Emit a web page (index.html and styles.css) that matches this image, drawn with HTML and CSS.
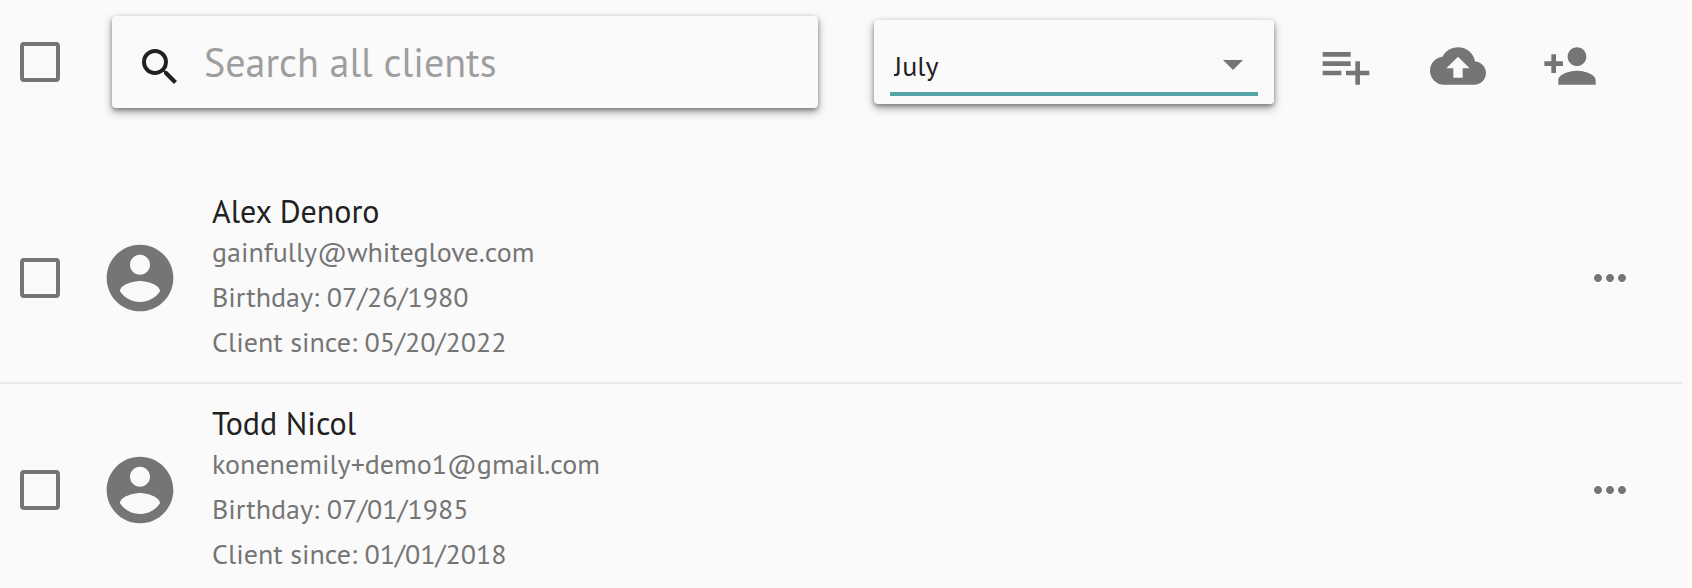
FILE: index.html
```html
<!doctype html>
<html lang="en">
  <head>
    <meta charset="UTF-8" />
    <meta name="viewport" content="width=device-width, initial-scale=1.0" />
    <title>Clients</title>
    <link rel="stylesheet" href="styles.css" />
  </head>
  <body>
    <header class="toolbar">
      <input class="checkbox" type="checkbox" aria-label="Select all clients" />

      <label class="search card">
        <svg class="search-icon" viewBox="0 0 24 24" aria-hidden="true">
          <path
            d="M15.5 14h-.79l-.28-.27A6.471 6.471 0 0 0 16 9.5 6.5 6.5 0 1 0 9.5 16c1.61 0 3.09-.59 4.23-1.57l.27.28v.79l5 4.99L20.49 19l-4.99-5zm-6 0C7.01 14 5 11.99 5 9.5S7.01 5 9.5 5 14 7.01 14 9.5 11.99 14 9.5 14z"
          />
        </svg>
        <input
          class="search-input"
          type="text"
          placeholder="Search all clients"
          aria-label="Search all clients"
        />
      </label>

      <div class="month card">
        <select class="month-select" aria-label="Birthday month">
          <option>January</option>
          <option>February</option>
          <option>March</option>
          <option>April</option>
          <option>May</option>
          <option>June</option>
          <option selected>July</option>
          <option>August</option>
          <option>September</option>
          <option>October</option>
          <option>November</option>
          <option>December</option>
        </select>
        <svg class="month-arrow" viewBox="0 0 24 24" aria-hidden="true">
          <path d="M7 10l5 5 5-5z" />
        </svg>
      </div>

      <div class="actions">
        <button class="icon-button" type="button" aria-label="Add to list">
          <svg viewBox="0 0 24 24">
            <path
              d="M14 10H2v2h12v-2zm0-4H2v2h12V6zm4 8v-4h-2v4h-4v2h4v4h2v-4h4v-2h-4zM2 16h8v-2H2v2z"
            />
          </svg>
        </button>
        <button class="icon-button" type="button" aria-label="Upload clients">
          <svg viewBox="0 0 24 24">
            <path
              d="M19.35 10.04C18.67 6.59 15.64 4 12 4 9.11 4 6.6 5.64 5.35 8.04 2.34 8.36 0 10.91 0 14c0 3.31 2.69 6 6 6h13c2.76 0 5-2.24 5-5 0-2.64-2.05-4.78-4.65-4.96zM14 13v4h-4v-4H7l5-5 5 5h-3z"
            />
          </svg>
        </button>
        <button class="icon-button" type="button" aria-label="Add client">
          <svg viewBox="0 0 24 24">
            <path
              d="M15 12c2.21 0 4-1.79 4-4s-1.79-4-4-4-4 1.79-4 4 1.79 4 4 4zm-9-2V7H4v3H1v2h3v3h2v-3h3v-2H6zm9 4c-2.67 0-8 1.34-8 4v2h16v-2c0-2.66-5.33-4-8-4z"
            />
          </svg>
        </button>
      </div>
    </header>

    <ul class="client-list">
      <li class="client">
        <input class="checkbox" type="checkbox" aria-label="Select Alex Denoro" />
        <svg class="avatar" viewBox="0 0 24 24" aria-hidden="true">
          <path
            d="M12 2C6.48 2 2 6.48 2 12s4.48 10 10 10 10-4.48 10-10S17.52 2 12 2zm0 3c1.66 0 3 1.34 3 3s-1.34 3-3 3-3-1.34-3-3 1.34-3 3-3zm0 14.2c-2.5 0-4.71-1.28-6-3.22.03-1.99 4-3.08 6-3.08 1.99 0 5.97 1.09 6 3.08-1.29 1.94-3.5 3.22-6 3.22z"
          />
        </svg>
        <div class="client-text">
          <h3>Alex Denoro</h3>
          <p>gainfully@whiteglove.com</p>
          <p>Birthday: 07/26/1980</p>
          <p>Client since: 05/20/2022</p>
        </div>
        <button class="more-button" type="button" aria-label="More options">
          <svg viewBox="0 0 24 24">
            <path
              d="M6 10c-1.1 0-2 .9-2 2s.9 2 2 2 2-.9 2-2-.9-2-2-2zm12 0c-1.1 0-2 .9-2 2s.9 2 2 2 2-.9 2-2-.9-2-2-2zm-6 0c-1.1 0-2 .9-2 2s.9 2 2 2 2-.9 2-2-.9-2-2-2z"
            />
          </svg>
        </button>
      </li>

      <li class="client">
        <input class="checkbox" type="checkbox" aria-label="Select Todd Nicol" />
        <svg class="avatar" viewBox="0 0 24 24" aria-hidden="true">
          <path
            d="M12 2C6.48 2 2 6.48 2 12s4.48 10 10 10 10-4.48 10-10S17.52 2 12 2zm0 3c1.66 0 3 1.34 3 3s-1.34 3-3 3-3-1.34-3-3 1.34-3 3-3zm0 14.2c-2.5 0-4.71-1.28-6-3.22.03-1.99 4-3.08 6-3.08 1.99 0 5.97 1.09 6 3.08-1.29 1.94-3.5 3.22-6 3.22z"
          />
        </svg>
        <div class="client-text">
          <h3>Todd Nicol</h3>
          <p>konenemily+demo1@gmail.com</p>
          <p>Birthday: 07/01/1985</p>
          <p>Client since: 01/01/2018</p>
        </div>
        <button class="more-button" type="button" aria-label="More options">
          <svg viewBox="0 0 24 24">
            <path
              d="M6 10c-1.1 0-2 .9-2 2s.9 2 2 2 2-.9 2-2-.9-2-2-2zm12 0c-1.1 0-2 .9-2 2s.9 2 2 2 2-.9 2-2-.9-2-2-2zm-6 0c-1.1 0-2 .9-2 2s.9 2 2 2 2-.9 2-2-.9-2-2-2z"
            />
          </svg>
        </button>
      </li>
    </ul>
  </body>
</html>
```
FILE: styles.css
```css
* {
  box-sizing: border-box;
}
body {
  margin: 0;
  background-color: #fafafa;
  color: #212121;
  font-family: "PT Sans", Lato, sans-serif;
  font-size: 28px;
}
svg {
  display: block;
  fill: currentColor;
}
button {
  padding: 0;
  border: none;
  background: none;
  color: #757575;
  cursor: pointer;
}
.checkbox {
  appearance: none;
  flex: none;
  width: 40px;
  height: 40px;
  margin: 0;
  border: 4px solid #757575;
  border-radius: 4px;
}
.checkbox:checked {
  background-color: #757575;
}
.card {
  border-radius: 4px;
  background-color: #fafafa;
  box-shadow:
    0 2px 4px rgba(0, 0, 0, 0.3),
    0 4px 10px rgba(0, 0, 0, 0.35);
}

/* Toolbar */
.toolbar {
  display: flex;
  align-items: center;
  padding: 16px 94px 16px 20px;
}
.search {
  display: flex;
  flex: 1;
  align-items: center;
  height: 92px;
  margin-left: 52px;
  padding: 0 24px;
}
.search-icon {
  flex: none;
  width: 48px;
  height: 48px;
  margin-top: 10px;
}
.search-input {
  flex: 1;
  min-width: 0;
  height: 60px;
  margin-left: 20px;
  padding: 0;
  border: none;
  outline: none;
  background: none;
  color: inherit;
  font: inherit;
  font-size: 40px;
}
.search-input::placeholder {
  color: #9e9e9e;
}
.month {
  position: relative;
  width: 400px;
  height: 84px;
  margin-left: 56px;
  padding: 16px 16px 8px;
}
.month-select {
  appearance: none;
  width: 100%;
  height: 60px;
  padding: 2px 60px 0 4px;
  border: none;
  border-bottom: 4px solid #54a4a8;
  border-radius: 0;
  outline: none;
  background: none;
  color: inherit;
  font: inherit;
}
.month-arrow {
  position: absolute;
  top: 20px;
  right: 17px;
  width: 48px;
  height: 48px;
  color: #757575;
  pointer-events: none;
}
.actions {
  display: flex;
  gap: 56px;
  margin-left: 44px;
  padding-top: 8px;
}
.icon-button svg {
  width: 56px;
  height: 56px;
}

/* Client list */
.client-list {
  margin: 48px 10px 0 0;
  padding: 0;
  list-style: none;
}
.client {
  display: flex;
  align-items: center;
  padding: 2px 48px 0 20px;
}
.client + .client {
  border-top: 2px solid #e8e8e8;
}
.avatar {
  flex: none;
  width: 80px;
  height: 80px;
  margin-left: 40px;
  color: #757575;
}
.client-text {
  flex: 1;
  margin-left: 32px;
  padding: 19px 0 18px;
}
.client-text h3 {
  margin: 0;
  font-size: 32px;
  font-weight: 400;
  line-height: 36px;
}
.client-text p {
  margin: 0;
  color: #757575;
  line-height: 45px;
}
.more-button svg {
  width: 48px;
  height: 48px;
}
```
